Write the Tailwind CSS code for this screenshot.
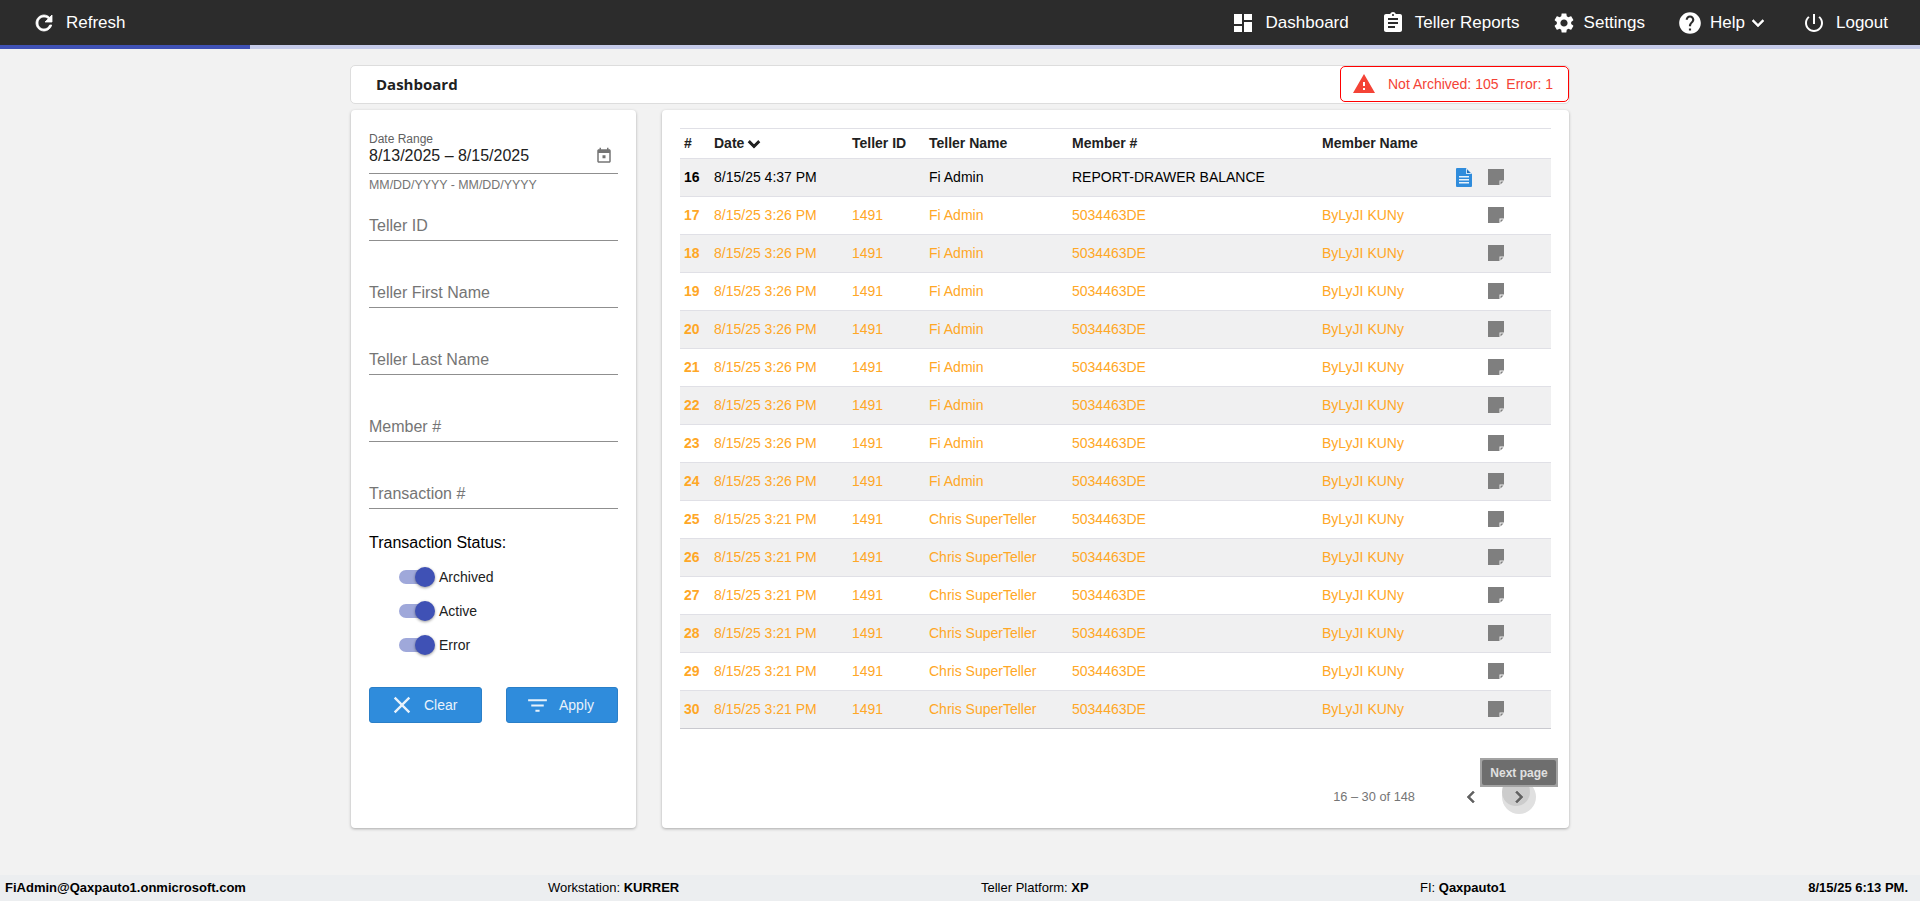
<!DOCTYPE html>
<html lang="en">
<head>
    <meta charset="UTF-8">
    <meta name="viewport" content="width=device-width, initial-scale=1.0">
    <title>Dashboard</title>
    <script src="https://cdn.jsdelivr.net/npm/@tailwindcss/browser@4"></script>
</head>
<body class="bg-[#f2f2f2] font-['Liberation_Sans',Arial,sans-serif] text-black h-[901px] overflow-hidden flex flex-col">
    <!-- Top bar -->
    <header class="h-[45px] bg-[#2c2c2c] text-white flex items-center justify-between text-[17px] pl-[32px] pr-[32px]">
        <div class="flex items-center gap-[10px]">
            <svg class="w-[24px] h-[24px] fill-white stroke-white stroke-[0.8]" viewBox="0 0 24 24"><path d="M17.65 6.35C16.2 4.9 14.21 4 12 4c-4.42 0-7.99 3.58-7.99 8s3.57 8 7.99 8c3.73 0 6.84-2.55 7.73-6h-2.08c-.82 2.33-3.04 4-5.65 4-3.31 0-6-2.69-6-6s2.69-6 6-6c1.66 0 3.14.69 4.22 1.78L13 11h7V4l-2.35 2.35z"/></svg>
            <span>Refresh</span>
        </div>
        <nav class="flex items-center gap-[32px]">
            <div class="flex items-center gap-[11px]">
                <svg class="w-[24px] h-[24px] fill-white" viewBox="0 0 24 24"><path d="M3 13h8V3H3v10zm0 8h8v-6H3v6zm10 0h8V11h-8v10zm0-18v6h8V3h-8z"/></svg>
                <span>Dashboard</span>
            </div>
            <div class="flex items-center gap-[10px]">
                <svg class="w-[24px] h-[24px] fill-white" viewBox="0 0 24 24"><path d="M19 3h-4.18C14.4 1.84 13.3 1 12 1c-1.3 0-2.4.84-2.82 2H5c-1.1 0-2 .9-2 2v14c0 1.1.9 2 2 2h14c1.1 0 2-.9 2-2V5c0-1.1-.9-2-2-2zm-7 0c.55 0 1 .45 1 1s-.45 1-1 1-1-.45-1-1 .45-1 1-1zm2 14H7v-2h7v2zm3-4H7v-2h10v2zm0-4H7V7h10v2z"/></svg>
                <span>Teller Reports</span>
            </div>
            <div class="flex items-center gap-[8px]">
                <svg class="w-[24px] h-[24px] fill-white" viewBox="0 0 24 24"><path d="M19.14 12.94c.04-.3.06-.61.06-.94 0-.32-.02-.64-.07-.94l2.03-1.58c.18-.14.23-.41.12-.61l-1.92-3.32c-.12-.22-.37-.29-.59-.22l-2.39.96c-.5-.38-1.03-.7-1.62-.94l-.36-2.54c-.04-.24-.24-.41-.48-.41h-3.84c-.24 0-.43.17-.47.41l-.36 2.54c-.59.24-1.13.57-1.62.94l-2.39-.96c-.22-.08-.47 0-.59.22L2.74 8.87c-.12.21-.08.47.12.61l2.03 1.58c-.05.3-.09.63-.09.94s.02.64.07.94l-2.03 1.58c-.18.14-.23.41-.12.61l1.92 3.32c.12.22.37.29.59.22l2.39-.96c.5.38 1.03.7 1.62.94l.36 2.54c.05.24.24.41.48.41h3.84c.24 0 .44-.17.47-.41l.36-2.54c.59-.24 1.13-.56 1.62-.94l2.39.96c.22.08.47 0 .59-.22l1.92-3.32c.12-.22.07-.47-.12-.61l-2.01-1.58zM12 15.6c-1.98 0-3.6-1.62-3.6-3.6s1.62-3.6 3.6-3.6 3.6 1.62 3.6 3.6-1.62 3.6-3.6 3.6z"/></svg>
                <span>Settings</span>
            </div>
            <div class="flex items-center gap-[7px]">
                <svg class="w-[26px] h-[26px] fill-white" viewBox="0 0 24 24"><path d="M12 2C6.48 2 2 6.48 2 12s4.48 10 10 10 10-4.48 10-10S17.52 2 12 2zm1 17h-2v-2h2v2zm2.07-7.75l-.9.92C13.45 12.9 13 13.5 13 15h-2v-.5c0-1.1.45-2.1 1.17-2.83l1.24-1.26c.37-.36.59-.86.59-1.41 0-1.1-.9-2-2-2s-2 .9-2 2H8c0-2.21 1.79-4 4-4s4 1.79 4 4c0 .88-.36 1.68-.93 2.25z"/></svg>
                <span>Help</span>
                <svg class="w-[24px] h-[24px] -ml-[6px] fill-white stroke-white stroke-[0.5]" viewBox="0 0 24 24"><path d="M16.59 8.59L12 13.17 7.41 8.59 6 10l6 6 6-6z"/></svg>
            </div>
            <div class="flex items-center gap-[10px]">
                <svg class="w-[24px] h-[24px] fill-white" viewBox="0 0 24 24"><path d="M13 3h-2v10h2V3zm4.83 2.17l-1.42 1.42C17.99 7.86 19 9.81 19 12c0 3.87-3.13 7-7 7s-7-3.13-7-7c0-2.19 1.01-4.14 2.58-5.42L6.17 5.17C4.23 6.82 3 9.26 3 12c0 4.97 4.03 9 9 9s9-4.03 9-9c0-2.74-1.23-5.18-3.17-6.83z"/></svg>
                <span>Logout</span>
            </div>
        </nav>
    </header>

    <!-- Progress bar -->
    <div class="h-[4px] bg-[#c5cae9]">
        <div class="h-full w-[250px] bg-[#3f51b5]"></div>
    </div>

    <main class="flex-1 w-[1220px] mx-auto pt-[16px]">
        <!-- Title bar -->
        <div class="h-[39px] bg-white rounded-[5px] border border-[#dddddd] flex items-center justify-between pl-[25px]">
            <h1 class="font-['Open_Sans',sans-serif] font-bold text-[15px] text-[#212121]">Dashboard</h1>
            <div class="w-[229px] h-[36px] -mt-[1px] bg-white border border-[#ff0000] rounded-[5px] flex items-center pl-[11px] gap-[12px] text-[14px] text-[#f44336] whitespace-pre">
                <svg class="w-[24px] h-[24px] fill-[#f44336]" viewBox="0 0 24 24"><path d="M1 21h22L12 2 1 21zm12-3h-2v-2h2v2zm0-4h-2v-4h2v4z"/></svg>
                <span>Not Archived: 105  Error: 1</span>
            </div>
        </div>

        <div class="flex mt-[6px] h-[718px] pl-[1px]">
            <!-- Filters -->
            <aside class="w-[285px] bg-white rounded-[4px] shadow-[0_1px_3px_rgba(0,0,0,0.3)] pt-[22px] px-[18px] flex flex-col">
                <div class="text-[12px] leading-[14px] text-[#616161]">Date Range</div>
                <div class="flex items-center justify-between h-[28px] pb-[8px] pr-[5px] border-b border-[#8f8f8f] text-[16px] text-[#212121]">
                    <span>8/13/2025 – 8/15/2025</span>
                    <svg class="w-[18px] h-[18px] fill-[#757575]" viewBox="0 0 24 24"><path d="M19 3h-1V1h-2v2H8V1H6v2H5c-1.11 0-2 .9-2 2v14c0 1.1.89 2 2 2h14c1.1 0 2-.9 2-2V5c0-1.1-.9-2-2-2zm0 16H5V8h14v11zM10 11h4v4h-4z"/></svg>
                </div>
                <div class="mt-[4px] text-[12.4px] leading-[14px] text-[#757575]">MM/DD/YYYY - MM/DD/YYYY</div>

                <div class="mt-[24px] flex flex-col gap-[42px] text-[16px] text-[#757575]">
                    <div class="h-[25px] leading-[20px] border-b border-[#8f8f8f]">Teller ID</div>
                    <div class="h-[25px] leading-[20px] border-b border-[#8f8f8f]">Teller First Name</div>
                    <div class="h-[25px] leading-[20px] border-b border-[#8f8f8f]">Teller Last Name</div>
                    <div class="h-[25px] leading-[20px] border-b border-[#8f8f8f]">Member #</div>
                    <div class="h-[25px] leading-[20px] border-b border-[#8f8f8f]">Transaction #</div>
                </div>

                <div class="mt-[24px] text-[16px] leading-[20px]">Transaction Status:</div>
                <div class="mt-[7px] pl-[30px] text-[14px] text-[#212121]">
                    <div class="h-[34px] flex items-center gap-[6px]">
                        <div class="relative w-[34px] h-[14px] rounded-full bg-[#9fa8da]">
                            <div class="absolute left-[16px] -top-[3px] w-[20px] h-[20px] rounded-full bg-[#3f51b5] shadow-[0_1px_3px_rgba(0,0,0,0.4)]"></div>
                        </div>
                        <span>Archived</span>
                    </div>
                    <div class="h-[34px] flex items-center gap-[6px]">
                        <div class="relative w-[34px] h-[14px] rounded-full bg-[#9fa8da]">
                            <div class="absolute left-[16px] -top-[3px] w-[20px] h-[20px] rounded-full bg-[#3f51b5] shadow-[0_1px_3px_rgba(0,0,0,0.4)]"></div>
                        </div>
                        <span>Active</span>
                    </div>
                    <div class="h-[34px] flex items-center gap-[6px]">
                        <div class="relative w-[34px] h-[14px] rounded-full bg-[#9fa8da]">
                            <div class="absolute left-[16px] -top-[3px] w-[20px] h-[20px] rounded-full bg-[#3f51b5] shadow-[0_1px_3px_rgba(0,0,0,0.4)]"></div>
                        </div>
                        <span>Error</span>
                    </div>
                </div>

                <div class="mt-[25px] flex justify-between text-[14px] text-[#e8f2fb]">
                    <button class="w-[113px] h-[36px] bg-[#2f8cdc] border border-[#2a7fc8] rounded-[3px] flex items-center pl-[18px] gap-[8px]">
                        <svg class="w-[28px] h-[28px] fill-[#e8f2fb]" viewBox="0 0 24 24"><path d="M19 6.41L17.59 5 12 10.59 6.41 5 5 6.41 10.59 12 5 17.59 6.41 19 12 13.41 17.59 19 19 17.59 13.41 12z"/></svg>
                        <span>Clear</span>
                    </button>
                    <button class="w-[112px] h-[36px] bg-[#2f8cdc] border border-[#2a7fc8] rounded-[3px] flex items-center pl-[18px] gap-[9px]">
                        <svg class="w-[25px] h-[25px] fill-[#e8f2fb]" viewBox="0 0 24 24"><path d="M10 18h4v-2h-4v2zM3 6v2h18V6H3zm3 7h12v-2H6v2z"/></svg>
                        <span>Apply</span>
                    </button>
                </div>
            </aside>

            <!-- Results -->
            <section class="w-[907px] ml-[26px] bg-white rounded-[4px] shadow-[0_1px_3px_rgba(0,0,0,0.3)] pt-[18px] pl-[18px]">
                <table class="w-[871px] table-fixed border-collapse text-[14px]">
                    <colgroup>
                        <col class="w-[34px]"><col class="w-[138px]"><col class="w-[77px]"><col class="w-[143px]"><col class="w-[250px]"><col class="w-[134px]"><col>
                    </colgroup>
                    <thead>
                        <tr class="h-[30px] border-y border-[#e0e0e6] text-left font-bold text-[#212121]">
                            <th class="pl-[4px]">#</th>
                            <th>
                                <span class="flex items-center">Date
                                    <svg class="w-[22px] h-[22px] -ml-[1px] fill-[#212121] stroke-[#212121] stroke-[1.2]" viewBox="0 0 24 24"><path d="M16.59 8.59L12 13.17 7.41 8.59 6 10l6 6 6-6z"/></svg>
                                </span>
                            </th>
                            <th>Teller ID</th>
                            <th>Teller Name</th>
                            <th>Member #</th>
                            <th>Member Name</th>
                            <th></th>
                        </tr>
                    </thead>
                    <tbody id="rows"></tbody>
                </table>

                <!-- Pagination -->
                <div class="relative mt-[44px] h-[48px] w-[871px] flex items-center justify-end pr-[12px]">
                    <span class="text-[12.8px] text-[#757575] mr-[36px]">16 – 30 of 148</span>
                    <div class="w-[40px] h-[40px] flex items-center justify-center">
                        <svg class="w-[24px] h-[24px] fill-[#616161] stroke-[#616161] stroke-[0.6]" viewBox="0 0 24 24"><path d="M15.41 7.41L14 6l-6 6 6 6 1.41-1.41L10.83 12z"/></svg>
                    </div>
                    <div class="relative w-[40px] h-[40px] ml-[8px] flex items-center justify-center">
                        <div class="absolute left-[3px] top-[3px] w-[34px] h-[34px] rounded-full bg-[#e0e0e0]"></div>
                        <div class="absolute left-[3px] top-[1px] w-[28px] h-[28px] rounded-full bg-[#cccccc]"></div>
                        <svg class="relative w-[24px] h-[24px] fill-[#616161] stroke-[#616161] stroke-[0.6]" viewBox="0 0 24 24"><path d="M10 6L8.59 7.41 13.17 12l-4.58 4.59L10 18l6-6z"/></svg>
                    </div>
                    <div class="absolute right-[-7px] top-[-15px] w-[78px] h-[29px] bg-[#a3a3a3] p-[2px]">
                        <div class="h-full bg-[#6e6e6e] rounded-[2px] flex items-center justify-center text-[12px] font-bold text-[#e0e0e0]">Next page</div>
                    </div>
                </div>
            </section>
        </div>
    </main>

    <!-- Status bar -->
    <footer class="h-[26px] bg-[#eceef0] grid grid-cols-[543px_433px_439px_388px_1fr] items-center pl-[5px] pr-[12px] text-[13px] whitespace-nowrap">
        <b>FiAdmin@Qaxpauto1.onmicrosoft.com</b>
        <span>Workstation: <b>KURRER</b></span>
        <span>Teller Platform: <b>XP</b></span>
        <span>FI: <b>Qaxpauto1</b></span>
        <b class="text-right">8/15/25 6:13 PM.</b>
    </footer>

    <script>
        const rows = [
            { n: 16, date: '8/15/25 4:37 PM', id: '', teller: 'Fi Admin', member: 'REPORT-DRAWER BALANCE', name: '', report: true }
        ];
        for (let n = 17; n <= 30; n++) {
            rows.push({
                n,
                date: n < 25 ? '8/15/25 3:26 PM' : '8/15/25 3:21 PM',
                id: '1491',
                teller: n < 25 ? 'Fi Admin' : 'Chris SuperTeller',
                member: '5034463DE',
                name: 'ByLyJI KUNy'
            });
        }

        const docIcon = `<svg class="w-[16px] h-[19px]" viewBox="0 0 16 19"><path fill="#2f8cdc" d="M1 0h9l6 6v12a1 1 0 0 1-1 1H1a1 1 0 0 1-1-1V1a1 1 0 0 1 1-1z"/><path fill="#cfe3f6" d="M10 0l6 6h-6z"/><path fill="#1f6fb8" d="M11 1.5L14.5 5H11z"/><path fill="#e8f2fb" d="M3 8h10v1.5H3zM3 11h10v1.5H3zM3 14h10v1.5H3z"/></svg>`;
        const noteIcon = `<svg class="w-[16px] h-[16px] -mt-[1px]" viewBox="0 0 16 16"><path fill="#7f7f7f" d="M0 0h16v11.5h-4.5V16H0z"/><path fill="#7f7f7f" d="M15.5 12.5l-3 3v-3z"/></svg>`;

        document.getElementById('rows').innerHTML = rows.map((r, i) => `
            <tr class="h-[38px] border-b ${i === 14 ? 'border-[#c9c9cf]' : 'border-[#e0e0e6]'} ${i % 2 === 0 ? 'bg-[#f0f0f1]' : 'bg-white'} ${r.report ? 'text-black' : 'text-[#ffa726]'}">
                <td class="pl-[4px] font-bold">${r.n}</td>
                <td>${r.date}</td>
                <td>${r.id}</td>
                <td>${r.teller}</td>
                <td>${r.member}</td>
                <td>${r.name}</td>
                <td>
                    <div class="flex items-center gap-[16px] ${r.report ? '' : 'pl-[32px]'}">
                        ${r.report ? docIcon : ''}${noteIcon}
                    </div>
                </td>
            </tr>`).join('');
    </script>
</body>
</html>
